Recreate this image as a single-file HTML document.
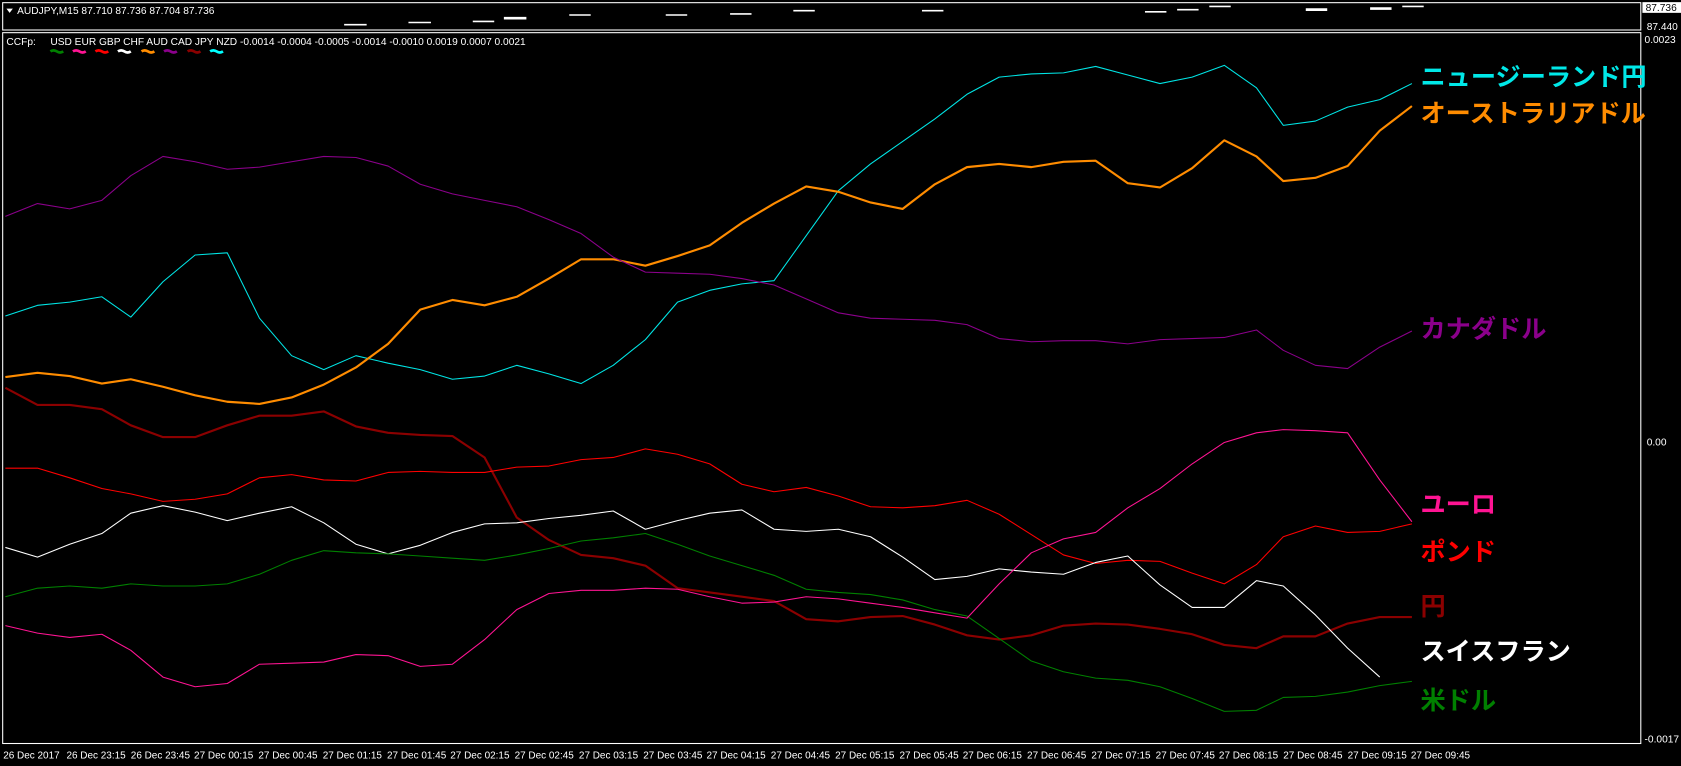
<!DOCTYPE html>
<html><head><meta charset="utf-8"><style>
html,body{margin:0;padding:0;background:#000;width:1681px;height:766px;overflow:hidden}
svg{display:block}
text{font-family:"Liberation Sans","Noto Sans CJK JP",sans-serif}
.s{fill:#fff;font-size:9.5px}
.j{font-size:23.5px;font-weight:bold;font-family:"Noto Sans CJK JP","Liberation Sans",sans-serif}
</style></head><body>
<svg width="1681" height="766" viewBox="0 0 1568 715" preserveAspectRatio="none" xmlns="http://www.w3.org/2000/svg">
<rect width="1568" height="715" fill="#000"/>
<rect x="2.5" y="2.5" width="1528" height="25.5" fill="none" stroke="#fff" stroke-width="1"/>
<rect x="2.5" y="30.5" width="1528" height="663.5" fill="none" stroke="#fff" stroke-width="1"/>
<polygon points="6,8 12,8 9,12" fill="#fff"/>
<text class="s" x="16" y="13">AUDJPY,M15  87.710 87.736 87.704 87.736</text>
<g stroke="#fff" stroke-width="1.5">
<line x1="321" y1="23" x2="342" y2="23"/><line x1="381" y1="21" x2="402" y2="21"/><line x1="441" y1="20" x2="461" y2="20"/><line x1="470" y1="17" x2="491" y2="17" stroke-width="2.5"/>
<line x1="531" y1="14" x2="551" y2="14"/><line x1="621" y1="14" x2="641" y2="14"/><line x1="681" y1="13" x2="701" y2="13"/><line x1="740" y1="10" x2="760" y2="10"/><line x1="860" y1="10" x2="880" y2="10"/>
<line x1="1068" y1="11" x2="1088" y2="11"/><line x1="1098" y1="9" x2="1118" y2="9"/><line x1="1128" y1="6" x2="1148" y2="6"/><line x1="1218" y1="9" x2="1238" y2="9" stroke-width="2.5"/><line x1="1278" y1="8" x2="1298" y2="8" stroke-width="2.5"/><line x1="1308" y1="6" x2="1328" y2="6"/>
</g>
<rect x="1532" y="2" width="36" height="10" fill="#fff"/>
<text x="1535" y="10.5" style="font-size:9.5px" fill="#000">87.736</text>
<text class="s" x="1536" y="28">87.440</text>
<text class="s" x="1534" y="40">0.0023</text>
<text class="s" x="1536" y="416">0.00</text>
<text class="s" x="1534" y="693">-0.0017</text>
<text class="s" x="6" y="42">CCFp:</text>
<text class="s" x="47" y="42">USD EUR GBP CHF AUD CAD JPY NZD -0.0014 -0.0004 -0.0005 -0.0014 -0.0010 0.0019 0.0007 0.0021</text>
<g stroke-width="2.5" fill="none">
<path d="M47,48 q3,-2 6,0 t6,0" stroke="#008000"/><path d="M68,48 q3,-2 6,0 t6,0" stroke="#ff1493"/><path d="M89,48 q3,-2 6,0 t6,0" stroke="#f00"/><path d="M110,48 q3,-2 6,0 t6,0" stroke="#fff"/><path d="M132,48 q3,-2 6,0 t6,0" stroke="#ff8c00"/><path d="M153,48 q3,-2 6,0 t6,0" stroke="#8b008b"/><path d="M175,48 q3,-2 6,0 t6,0" stroke="#8b0000"/><path d="M196,48 q3,-2 6,0 t6,0" stroke="#0ff"/>
</g>
<g fill="#fff" style="font-size:9.3px">
<text x="3" y="708">26 Dec 2017</text><text x="62" y="708">26 Dec 23:15</text><text x="122" y="708">26 Dec 23:45</text><text x="181" y="708">27 Dec 00:15</text><text x="241" y="708">27 Dec 00:45</text><text x="301" y="708">27 Dec 01:15</text><text x="361" y="708">27 Dec 01:45</text><text x="420" y="708">27 Dec 02:15</text><text x="480" y="708">27 Dec 02:45</text><text x="540" y="708">27 Dec 03:15</text><text x="600" y="708">27 Dec 03:45</text><text x="659" y="708">27 Dec 04:15</text><text x="719" y="708">27 Dec 04:45</text><text x="779" y="708">27 Dec 05:15</text><text x="839" y="708">27 Dec 05:45</text><text x="898" y="708">27 Dec 06:15</text><text x="958" y="708">27 Dec 06:45</text><text x="1018" y="708">27 Dec 07:15</text><text x="1078" y="708">27 Dec 07:45</text><text x="1137" y="708">27 Dec 08:15</text><text x="1197" y="708">27 Dec 08:45</text><text x="1257" y="708">27 Dec 09:15</text><text x="1316" y="708">27 Dec 09:45</text>
</g>
<g fill="none" stroke-linejoin="round">
<polyline stroke="#00e5e5" stroke-width="1" points="5,295 35,285 65,282 95,277 122,296 152,263 182,238 212,236 242,297 272,332 302,345 332,332 362,339 392,345 422,354 452,351 482,341 512,349 542,358 572,341 602,317 632,282 662,271 692,265 722,262 752,220 782,178 812,153 842,132 872,111 902,88 932,72 962,69 992,68 1022,62 1052,70 1082,78 1112,72 1142,61 1172,82 1197,117 1227,113 1257,100 1287,93 1317,78"/>
<polyline stroke="#ff8c00" stroke-width="2" points="5,352 35,348 65,351 95,358 122,354 152,361 182,369 212,375 242,377 272,371 302,359 332,343 362,321 392,289 422,280 452,285 482,277 512,260 542,242 572,242 602,248 632,239 662,229 692,208 722,190 752,174 782,179 812,189 842,195 872,172 902,156 932,153 962,156 992,151 1022,150 1052,171 1082,175 1112,157 1142,131 1172,146 1197,169 1227,166 1257,155 1287,122 1317,99"/>
<polyline stroke="#8b008b" stroke-width="1" points="5,202 35,190 65,195 95,187 122,164 152,146 182,151 212,158 242,156 272,151 302,146 332,147 362,155 392,172 422,181 452,187 482,193 512,205 542,218 572,240 602,254 632,255 662,256 692,260 722,266 752,279 782,292 812,297 842,298 872,299 902,303 932,316 962,319 992,318 1022,318 1052,321 1082,317 1112,316 1142,315 1172,308 1197,327 1227,341 1257,344 1287,324 1317,309"/>
<polyline stroke="#8b0000" stroke-width="2" points="5,362 35,378 65,378 95,382 122,397 152,408 182,408 212,397 242,388 272,388 302,384 332,398 362,404 392,406 422,407 452,427 482,483 512,504 542,518 572,521 602,528 632,549 662,553 692,557 722,561 752,578 782,580 812,576 842,575 872,583 902,593 932,597 962,593 992,584 1022,582 1052,583 1082,587 1112,592 1142,602 1172,605 1197,594 1227,594 1257,582 1287,576 1317,576"/>
<polyline stroke="#f00" stroke-width="1" points="5,437 35,437 65,446 95,456 122,461 152,468 182,466 212,461 242,446 272,443 302,448 332,449 362,441 392,440 422,441 452,441 482,436 512,435 542,429 572,427 602,419 632,424 662,433 692,452 722,459 752,455 782,463 812,473 842,474 872,472 902,467 932,480 962,499 992,518 1022,526 1052,523 1082,524 1112,535 1142,545 1172,527 1197,501 1227,491 1257,497 1287,496 1317,489"/>
<polyline stroke="#fff" stroke-width="1" points="5,511 35,520 65,508 95,498 122,479 152,472 182,478 212,486 242,479 272,473 302,488 332,508 362,517 392,509 422,497 452,489 482,488 512,484 542,481 572,477 602,494 632,486 662,479 692,476 722,494 752,496 782,494 812,501 842,520 872,541 902,538 932,531 962,534 992,536 1022,525 1052,519 1082,546 1112,567 1142,567 1172,542 1197,547 1227,574 1257,605 1287,632"/>
<polyline stroke="#008000" stroke-width="1" points="5,557 35,549 65,547 95,549 122,545 152,547 182,547 212,545 242,536 272,523 302,514 332,516 362,517 392,519 422,521 452,523 482,518 512,512 542,505 572,502 602,498 632,508 662,519 692,528 722,537 752,550 782,553 812,555 842,560 872,569 902,575 932,596 962,617 992,627 1022,633 1052,635 1082,641 1112,652 1142,664 1172,663 1197,651 1227,650 1257,646 1287,640 1317,636"/>
<polyline stroke="#ff1493" stroke-width="1" points="5,584 35,591 65,595 95,592 122,607 152,632 182,641 212,638 242,620 272,619 302,618 332,611 362,612 392,622 422,620 452,597 482,569 512,554 542,551 572,551 602,549 632,550 662,557 692,563 722,562 752,557 782,559 812,563 842,567 872,572 902,577 932,545 962,516 992,503 1022,497 1052,474 1082,456 1112,433 1142,413 1172,404 1197,401 1227,402 1257,404 1287,448 1317,487"/>
</g>
<text class="j" x="1325" y="80" fill="#00e8e8">ニュージーランド円</text>
<text class="j" x="1325" y="114" fill="#ff8c00">オーストラリアドル</text>
<text class="j" x="1325" y="315" fill="#8b008b">カナダドル</text>
<text class="j" x="1325" y="479" fill="#ff1493">ユーロ</text>
<text class="j" x="1325" y="523" fill="#f00">ポンド</text>
<text class="j" x="1325" y="574" fill="#8b0000">円</text>
<text class="j" x="1325" y="616" fill="#fff">スイスフラン</text>
<text class="j" x="1325" y="662" fill="#008000">米ドル</text>
</svg>
</body></html>
